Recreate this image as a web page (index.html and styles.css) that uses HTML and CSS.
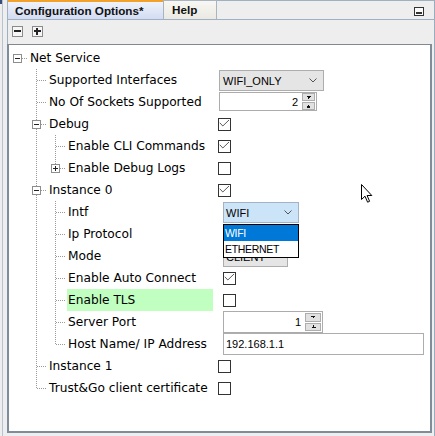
FILE: index.html
```html
<!DOCTYPE html>
<html>
<head>
<meta charset="utf-8">
<link rel="stylesheet" href="styles.css">
</head>
<body>
<div class="side"></div>
<div class="panel">
  <div class="tabs">
    <div class="tab active">Configuration Options*</div>
    <div class="tab help">Help</div>
    <div class="tabfill"><span class="minbtn"></span></div>
  </div>
  <div class="toolbar">
    <span class="tbtn minus"></span>
    <span class="tbtn plus"></span>
  </div>
  <div class="tree">
    <div class="row">
      <div class="lab"><span class="g h"><i class="box minus"></i></span><span class="txt">Net Service</span></div>
      <div class="val"></div>
    </div>
    <div class="row">
      <div class="lab"><span class="g"></span><span class="g t"></span><span class="txt">Supported Interfaces</span></div>
      <div class="val"><div class="combo w1"><span>WIFI_ONLY</span><svg class="chev" viewBox="0 0 8 5"><path d="M0.5 0.5 L4 4 L7.5 0.5"/></svg></div></div>
    </div>
    <div class="row">
      <div class="lab"><span class="g"></span><span class="g t"></span><span class="txt">No Of Sockets Supported</span></div>
      <div class="val"><div class="spin s1"><span class="num">2</span><span class="arrows"><span class="sb up"></span><span class="sb dn"></span></span></div></div>
    </div>
    <div class="row">
      <div class="lab"><span class="g"></span><span class="g t"><i class="box minus"></i></span><span class="txt">Debug</span></div>
      <div class="val"><span class="cb"><svg viewBox="0 0 11 11"><path d="M0.8 3.8 L3.8 7 L10 1"/></svg></span></div>
    </div>
    <div class="row">
      <div class="lab"><span class="g"></span><span class="g v"></span><span class="g t"></span><span class="txt">Enable CLI Commands</span></div>
      <div class="val"><span class="cb"><svg viewBox="0 0 11 11"><path d="M0.8 3.8 L3.8 7 L10 1"/></svg></span></div>
    </div>
    <div class="row">
      <div class="lab"><span class="g"></span><span class="g v"></span><span class="g l"><i class="box plus"></i></span><span class="txt">Enable Debug Logs</span></div>
      <div class="val"><span class="cb"></span></div>
    </div>
    <div class="row">
      <div class="lab"><span class="g"></span><span class="g t"><i class="box minus"></i></span><span class="txt">Instance 0</span></div>
      <div class="val"><span class="cb"><svg viewBox="0 0 11 11"><path d="M0.8 3.8 L3.8 7 L10 1"/></svg></span></div>
    </div>
    <div class="row inst">
      <div class="lab"><span class="g"></span><span class="g v"></span><span class="g t"></span><span class="txt">Intf</span></div>
      <div class="val">
        <div class="dd">
          <div class="combo w2 open"><span>WIFI</span><svg class="chev" viewBox="0 0 8 5"><path d="M0.5 0.5 L4 4 L7.5 0.5"/></svg></div>
          <div class="pop">
            <div class="opt sel">WIFI</div>
            <div class="opt">ETHERNET</div>
          </div>
        </div>
      </div>
    </div>
    <div class="row inst">
      <div class="lab"><span class="g"></span><span class="g v"></span><span class="g t"></span><span class="txt">Ip Protocol</span></div>
      <div class="val"></div>
    </div>
    <div class="row inst">
      <div class="lab"><span class="g"></span><span class="g v"></span><span class="g t"></span><span class="txt">Mode</span></div>
      <div class="val"><div class="combo w3"><span class="under">CLIENT</span><svg class="chev" viewBox="0 0 8 5"><path d="M0.5 0.5 L4 4 L7.5 0.5"/></svg></div></div>
    </div>
    <div class="row inst">
      <div class="lab"><span class="g"></span><span class="g v"></span><span class="g t"></span><span class="txt">Enable Auto Connect</span></div>
      <div class="val"><span class="cb"><svg viewBox="0 0 11 11"><path d="M0.8 3.8 L3.8 7 L10 1"/></svg></span></div>
    </div>
    <div class="row inst">
      <div class="lab"><span class="g"></span><span class="g v"></span><span class="g t"></span><span class="txt hl">Enable TLS</span></div>
      <div class="val"><span class="cb"></span></div>
    </div>
    <div class="row inst">
      <div class="lab"><span class="g"></span><span class="g v"></span><span class="g t"></span><span class="txt">Server Port</span></div>
      <div class="val"><div class="spin s2"><span class="num">1</span><span class="arrows"><span class="sb up"></span><span class="sb dn"></span></span></div></div>
    </div>
    <div class="row inst">
      <div class="lab"><span class="g"></span><span class="g v"></span><span class="g l"></span><span class="txt">Host Name/ IP Address</span></div>
      <div class="val"><div class="tf">192.168.1.1</div></div>
    </div>
    <div class="row">
      <div class="lab"><span class="g"></span><span class="g t"></span><span class="txt">Instance 1</span></div>
      <div class="val"><span class="cb"></span></div>
    </div>
    <div class="row">
      <div class="lab"><span class="g"></span><span class="g l"></span><span class="txt">Trust&amp;Go client certificate</span></div>
      <div class="val"><span class="cb"></span></div>
    </div>
  </div>
</div>
<svg class="cursor" viewBox="0 0 12 20" width="12" height="20"><path d="M0.5 0.5 L0.5 15.5 L4 12.2 L6.6 18.2 L8.6 17.3 L6.1 11.5 L10.8 11.5 Z"/></svg>
</body>
</html>
```

FILE: styles.css
```css
* { box-sizing: border-box; margin: 0; padding: 0; }
html, body { width: 435px; height: 436px; overflow: hidden; }
body {
  background: #eeeeee;
  display: flex;
  align-items: flex-start;
  font-family: "DejaVu Sans", sans-serif;
  font-size: 12.2px;
  color: #000;
}
.side {
  width: 7px;
  height: 436px;
  flex: none;
  background:
    linear-gradient(#34507a, #34507a) 0 0 / 2px 4px no-repeat,
    linear-gradient(#b8c3ce, #b8c3ce) 2px 0 / 1px 100% no-repeat,
    #eeeeee;
}
.panel {
  width: 428px;
  height: 436px;
  flex: none;
  display: flex;
  flex-direction: column;
  border-right: 1px solid #9aabbc;
}
.tabs {
  height: 20px;
  display: flex;
  border-left: 1px solid #9eb0c2;
  border-bottom: 1px solid #9eb0c2;
  font-family: "Liberation Sans", Arial, sans-serif;
  font-weight: bold;
  font-size: 11.7px;
  color: #111;
}
.tab {
  line-height: 17px;
  white-space: nowrap;
}
.tab.active {
  width: 155px;
  border-top: 2px solid #f2a12a;
  background: linear-gradient(#eef2fb, #d3dcf3);
  padding-left: 7px;
}
.tab.help {
  width: 54px;
  border-top: 1px solid #a8b4c0;
  border-left: 1px solid #a8b4c0;
  border-right: 1px solid #a8b4c0;
  background: linear-gradient(#f8f7f3, #ebe9e2);
  padding-left: 8px;
  line-height: 18px;
}
.tabfill {
  flex: 1;
  border-top: 1px solid #9eb0c2;
  display: flex;
  justify-content: flex-end;
}
.minbtn {
  width: 10px;
  height: 9px;
  margin: 6px 10px 0 0;
  border: 1px solid #333;
  background: linear-gradient(#333, #333) 1px 4px / 6px 2px no-repeat, #fafafa;
}
.toolbar {
  height: 24px;
  display: flex;
  gap: 9px;
  padding: 6px 0 0 4px;
  border-left: 1px solid #9eb0c2;
}
.tbtn {
  width: 11px;
  height: 11px;
  border: 1px solid #8a8a8a;
  background: #f6f6f6;
}
.tbtn.minus {
  background: linear-gradient(#222, #222) 1px 3px / 7px 2px no-repeat, #f6f6f6;
}
.tbtn.plus {
  background:
    linear-gradient(#222, #222) 1px 3px / 7px 2px no-repeat,
    linear-gradient(#222, #222) 3px 1px / 2px 7px no-repeat,
    #f6f6f6;
}
.tree {
  height: 389px;
  margin-right: 2px;
  background: #fff;
  border-top: 1px solid #828790;
  border-left: 2px solid #7f8c99;
  border-right: 2px solid #7f8c99;
  border-bottom: 2px solid #7f8c99;
  padding-top: 2px;
}
.row {
  display: grid;
  grid-template-columns: 209px 1fr;
  height: 22px;
}
.row.inst { grid-template-columns: 214px 1fr; }
.lab {
  display: flex;
  height: 22px;
}
.g {
  width: 19px;
  height: 22px;
  flex: none;
  display: block;
}
.g.v {
  background: repeating-linear-gradient(to bottom, #9a9a9a 0 1px, transparent 1px 2px) 8px 0 / 1px 100% no-repeat;
}
.g.t {
  background:
    repeating-linear-gradient(to right, #9a9a9a 0 1px, transparent 1px 2px) 9px 11px / 10px 1px no-repeat,
    repeating-linear-gradient(to bottom, #9a9a9a 0 1px, transparent 1px 2px) 8px 0 / 1px 100% no-repeat;
}
.g.l {
  background:
    repeating-linear-gradient(to right, #9a9a9a 0 1px, transparent 1px 2px) 9px 11px / 10px 1px no-repeat,
    repeating-linear-gradient(to bottom, #9a9a9a 0 1px, transparent 1px 2px) 8px 0 / 1px 12px no-repeat;
}
.g.h {
  background: repeating-linear-gradient(to right, #9a9a9a 0 1px, transparent 1px 2px) 9px 11px / 10px 1px no-repeat;
}
.box {
  display: block;
  width: 9px;
  height: 9px;
  margin: 7px 0 0 4px;
  border: 1px solid #8e8e8e;
}
.box.minus {
  background: linear-gradient(#222, #222) 1px 3px / 5px 1px no-repeat, #fff;
}
.box.plus {
  background:
    linear-gradient(#222, #222) 1px 3px / 5px 1px no-repeat,
    linear-gradient(#222, #222) 3px 1px / 1px 5px no-repeat,
    #fff;
}
.txt {
  line-height: 21px;
  padding-top: 1px;
  white-space: nowrap;
  margin-left: 1px;
  padding-left: 1px;
}
.txt.hl {
  flex: 1;
  margin-right: 10px;
  background: #c0ffc0;
}
.val {
  height: 22px;
  font-family: "Liberation Sans", Arial, sans-serif;
  font-size: 11px;
}
.cb {
  display: block;
  width: 13px;
  height: 13px;
  margin-top: 5px;
  border: 1px solid #333;
  background: #fff;
}
.cb svg {
  display: block;
  width: 11px;
  height: 11px;
  fill: none;
  stroke: #5c5c5c;
  stroke-width: 1;
}
.combo {
  display: flex;
  align-items: center;
  justify-content: space-between;
  height: 21px;
  margin-top: 1px;
  border: 1px solid #adadad;
  background: #e5e5e5;
  padding: 0 6px 0 3px;
  color: #000;
}
.combo.w1 { width: 105px; margin-left: 1px; }
.combo.w2 { width: 76px; padding-left: 2px; }
.combo.w3 { width: 65px; padding-left: 2px; }
.combo.open {
  background: #cce4f7;
  border-color: #a3b3c5;
}
.chev {
  width: 8px;
  height: 5px;
  fill: none;
  stroke: #555;
  stroke-width: 1;
}
.dd {
  position: relative;
  width: 76px;
}
.pop {
  position: absolute;
  left: 0;
  top: 22px;
  width: 76px;
  border: 1px solid #000;
  background: #fff;
  z-index: 2;
  font-size: 10.5px;
}
.opt {
  height: 16px;
  line-height: 16px;
  padding-left: 1px;
  letter-spacing: -0.3px;
}
.opt.sel {
  background: #0078d7;
  color: #fff;
}
.spin {
  display: flex;
  background: #fff;
  border: 1px solid #acacac;
}
.spin.s1 { width: 98px; height: 19px; margin: 1px 0 0 1px; }
.spin.s2 { width: 100px; height: 22px; }
.num {
  flex: 1;
  text-align: right;
  padding-right: 4px;
  align-self: center;
}
.arrows {
  display: flex;
  flex-direction: column;
  gap: 1px;
  padding: 0 1px 0 0;
}
.s1 .arrows { width: 14px; }
.s2 .arrows { width: 17px; padding: 1px 1px 1px 0; }
.sb {
  flex: 1;
  border: 1px solid #adadad;
  background-color: #e1e1e1;
  background-repeat: no-repeat;
}
.sb.up { background-image: linear-gradient(to top right, transparent 50%, #111 50%), linear-gradient(to top left, transparent 50%, #111 50%); background-size: 3px 3px, 3px 3px; background-position: calc(50% - 1px) center, calc(50% + 1px) center; }
.sb.dn { background-image: linear-gradient(to bottom right, transparent 50%, #111 50%), linear-gradient(to bottom left, transparent 50%, #111 50%); background-size: 3px 3px, 3px 3px; background-position: calc(50% - 1px) center, calc(50% + 1px) center; }
.tf {
  width: 201px;
  height: 22px;
  border: 1px solid #adadad;
  background: #fff;
  padding-left: 2px;
  line-height: 20px;
}
.cursor {
  position: absolute;
  left: 361px;
  top: 184px;
  fill: #fff;
  stroke: #000;
  stroke-width: 1;
}
```
